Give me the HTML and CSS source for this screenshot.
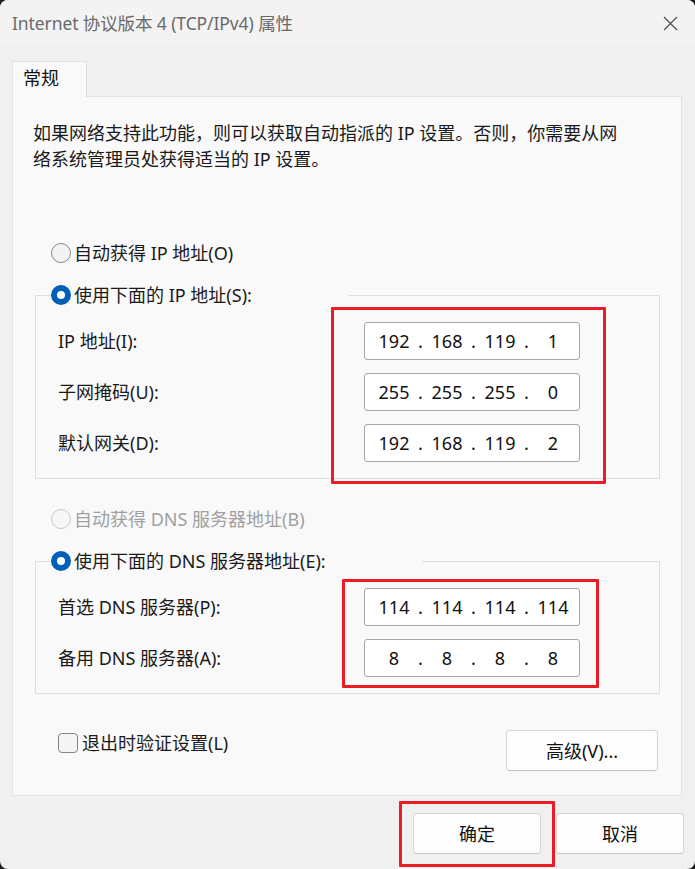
FILE: index.html
```html
<!DOCTYPE html>
<html lang="zh-CN">
<head>
<meta charset="utf-8">
<title>Internet 协议版本 4 (TCP/IPv4) 属性</title>
<link rel="stylesheet" href="styles.css">
</head>
<body>
<div class="window">
  <div class="titlebar">
    <span class="title">Internet 协议版本 4 (TCP/IPv4) 属性</span>
    <svg class="close" width="15" height="15" viewBox="0 0 15 15"><path d="M1 1L14 14M14 1L1 14" stroke="#4a4a4a" stroke-width="1.1" fill="none"/></svg>
  </div>
  <div class="content">
    <div class="tab">常规</div>
    <div class="panel">
      <p class="desc">如果网络支持此功能，则可以获取自动指派的 IP 设置。否则，你需要从网<br>络系统管理员处获得适当的 IP 设置。</p>

      <div class="radio-row first"><span class="radio"></span><span>自动获得 IP 地址(O)</span></div>
      <fieldset class="group">
        <legend><span class="radio checked"></span><span>使用下面的 IP 地址(S):</span></legend>
        <div class="rows">
          <div class="row"><span>IP 地址(I):</span>
            <div class="ip"><span class="oct">192</span><span class="dot">.</span><span class="oct">168</span><span class="dot">.</span><span class="oct">119</span><span class="dot">.</span><span class="oct">1</span></div></div>
          <div class="row"><span>子网掩码(U):</span>
            <div class="ip"><span class="oct">255</span><span class="dot">.</span><span class="oct">255</span><span class="dot">.</span><span class="oct">255</span><span class="dot">.</span><span class="oct">0</span></div></div>
          <div class="row"><span>默认网关(D):</span>
            <div class="ip"><span class="oct">192</span><span class="dot">.</span><span class="oct">168</span><span class="dot">.</span><span class="oct">119</span><span class="dot">.</span><span class="oct">2</span></div></div>
        </div>
      </fieldset>

      <div class="radio-row second disabled"><span class="radio"></span><span>自动获得 DNS 服务器地址(B)</span></div>
      <fieldset class="group">
        <legend><span class="radio checked"></span><span>使用下面的 DNS 服务器地址(E):</span></legend>
        <div class="rows">
          <div class="row"><span>首选 DNS 服务器(P):</span>
            <div class="ip"><span class="oct">114</span><span class="dot">.</span><span class="oct">114</span><span class="dot">.</span><span class="oct">114</span><span class="dot">.</span><span class="oct">114</span></div></div>
          <div class="row"><span>备用 DNS 服务器(A):</span>
            <div class="ip"><span class="oct">8</span><span class="dot">.</span><span class="oct">8</span><span class="dot">.</span><span class="oct">8</span><span class="dot">.</span><span class="oct">8</span></div></div>
        </div>
      </fieldset>

      <div class="footer">
        <div class="check-row"><span class="checkbox"></span><span>退出时验证设置(L)</span></div>
        <div class="btn advanced">高级(V)...</div>
      </div>
    </div>
    <div class="buttons">
      <div class="btn action">确定</div>
      <div class="btn action">取消</div>
    </div>
  </div>
  <div class="mark mark-ip"></div>
  <div class="mark mark-dns"></div>
  <div class="mark mark-ok"></div>
</div>
</body>
</html>
```

FILE: styles.css
```css
html, body {
  margin: 0;
  padding: 0;
}
body {
  background: #1f1f1f;
  font-family: "Noto Sans", "Noto Sans CJK SC", sans-serif;
  font-size: 18px;
  line-height: 26px;
  color: #1a1a1a;
}
.window {
  position: relative;
  width: 695px;
  height: 869px;
  border-radius: 8px;
  overflow: hidden;
  background: #f0f0f0;
}
.titlebar {
  height: 46px;
  box-sizing: border-box;
  display: flex;
  align-items: center;
  justify-content: space-between;
  padding: 0 17px 0 12px;
  background: #f3f3f3;
}
.title {
  color: #6a6a6a;
  font-size: 17.5px;
  letter-spacing: -0.1px;
}
.close {
  display: block;
}
.content {
  padding: 15px 13px 0 12px;
}
.tab {
  position: relative;
  z-index: 1;
  width: 75px;
  height: 36px;
  box-sizing: border-box;
  margin-bottom: -1px;
  border: 1px solid #e2e2e2;
  border-bottom: none;
  background: #f9f9f9;
  padding-left: 10px;
  line-height: 32px;
  color: #111;
}
.panel {
  height: 700px;
  box-sizing: border-box;
  border: 1px solid #e2e2e2;
  background: #f9f9f9;
  padding-top: 23px;
}
.desc {
  margin: 0 0 0 20px;
}
.radio-row {
  display: flex;
  align-items: center;
  gap: 3px;
  margin-left: 38px;
}
.radio-row.first {
  margin-top: 68px;
}
.radio-row.second {
  margin-top: 27px;
}
.disabled {
  color: #a0a0a0;
}
.radio {
  display: inline-block;
  width: 20px;
  height: 20px;
  box-sizing: border-box;
  border-radius: 50%;
  border: 1px solid #878787;
  background: #f3f3f3;
  flex: none;
}
.disabled .radio {
  border-color: #c9c9c9;
  background: #f7f7f7;
}
.radio.checked {
  border: 6px solid #005fb8;
  background: #fff;
}
.group {
  margin: 16px 21px 0 22px;
  padding: 0 0 16px;
  border: 1px solid #dedede;
  min-inline-size: 0;
}
.group legend {
  display: flex;
  align-items: center;
  gap: 3px;
  margin-left: 15px;
  padding: 0 96px 0 0;
}
.rows {
  display: flex;
  flex-direction: column;
  gap: 13px;
  padding: 14px 0 0 22px;
}
.row {
  display: grid;
  grid-template-columns: 306px 216px;
  align-items: center;
}
.ip {
  height: 38px;
  box-sizing: border-box;
  border: 1px solid #a6a6a6;
  border-radius: 3px;
  background: #fff;
  display: flex;
  align-items: center;
  padding-left: 8px;
  color: #111;
}
.oct {
  width: 42px;
  text-align: center;
}
.dot {
  width: 11px;
  text-align: center;
}
.footer {
  display: flex;
  align-items: flex-start;
  justify-content: space-between;
  margin-top: 36px;
  padding: 0 23px 0 45px;
}
.check-row {
  display: flex;
  align-items: center;
  gap: 4px;
}
.checkbox {
  width: 20px;
  height: 20px;
  box-sizing: border-box;
  border: 1px solid #858585;
  border-radius: 4px;
  background: #f5f5f5;
}
.btn {
  box-sizing: border-box;
  height: 41px;
  display: flex;
  align-items: center;
  justify-content: center;
  background: #fdfdfd;
  border: 1px solid #d6d6d6;
  border-bottom-color: #c2c2c2;
  border-radius: 4px;
  color: #111;
}
.advanced {
  width: 152px;
}
.buttons {
  display: flex;
  justify-content: flex-end;
  gap: 15px;
  margin: 17px -2px 0 0;
}
.action {
  width: 128px;
}
.mark {
  position: absolute;
  box-sizing: border-box;
  border: 3px solid #ec1c26;
  border-radius: 1px;
}
.mark-ip {
  left: 331px;
  top: 307px;
  width: 275px;
  height: 177px;
}
.mark-dns {
  left: 342px;
  top: 579px;
  width: 257px;
  height: 109px;
}
.mark-ok {
  left: 399px;
  top: 801px;
  width: 156px;
  height: 66px;
}
```
